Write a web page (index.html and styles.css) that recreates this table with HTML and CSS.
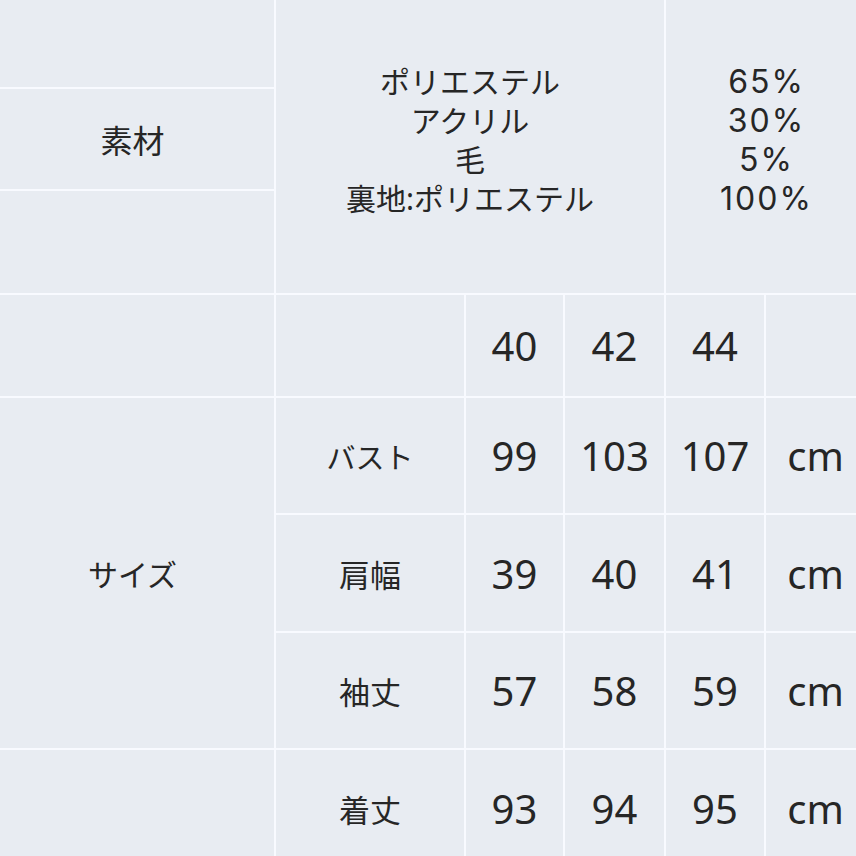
FILE: index.html
```html
<!DOCTYPE html>
<html lang="ja">
<head>
<meta charset="utf-8">
<link rel="stylesheet" href="styles.css">
</head>
<body>
<div class="frame">
  <div class="sheet">
    <div class="cell c-left r1"></div>
    <div class="cell c-left r2 label-big">素材</div>
    <div class="cell c-left r3"></div>
    <div class="cell material">
      <span>ポリエステル</span>
      <span>アクリル</span>
      <span>毛</span>
      <span>裏地:ポリエステル</span>
    </div>
    <div class="cell percent">
      <span>65%</span>
      <span>30%</span>
      <span>5%</span>
      <span>100%</span>
    </div>

    <div class="cell c-left r4"></div>
    <div class="cell c-label r4"></div>
    <div class="cell num r4 k1">40</div>
    <div class="cell num r4 k2">42</div>
    <div class="cell num r4 k3">44</div>
    <div class="cell num r4 k4"></div>

    <div class="cell c-left size label-kana">サイズ</div>

    <div class="cell c-label r5 label kana">バスト</div>
    <div class="cell num r5 k1">99</div>
    <div class="cell num r5 k2">103</div>
    <div class="cell num r5 k3">107</div>
    <div class="cell num r5 k4">cm</div>

    <div class="cell c-label r6 label">肩幅</div>
    <div class="cell num r6 k1">39</div>
    <div class="cell num r6 k2">40</div>
    <div class="cell num r6 k3">41</div>
    <div class="cell num r6 k4">cm</div>

    <div class="cell c-label r7 label">袖丈</div>
    <div class="cell num r7 k1">57</div>
    <div class="cell num r7 k2">58</div>
    <div class="cell num r7 k3">59</div>
    <div class="cell num r7 k4">cm</div>

    <div class="cell c-left r8"></div>
    <div class="cell c-label r8 label">着丈</div>
    <div class="cell num r8 k1">93</div>
    <div class="cell num r8 k2">94</div>
    <div class="cell num r8 k3">95</div>
    <div class="cell num r8 k4">cm</div>
  </div>
</div>
</body>
</html>
```

FILE: styles.css
```css
html, body {
  margin: 0;
  padding: 0;
  width: 856px;
  height: 856px;
  overflow: hidden;
  background: #e8ecf2;
}

.frame {
  width: 856px;
  height: 856px;
  overflow: hidden;
}

.sheet {
  margin-top: -14px;
  margin-left: -9px;
  display: grid;
  grid-template-columns: 283px 188px 97px 99px 98px 99px;
  grid-template-rows: 101px 100px 102px 101px 115px 116px 115px 116px;
  gap: 2px;
  background: #f8faff;
  width: 874px;
  font-family: "Noto Sans", "Noto Sans CJK JP", sans-serif;
  color: #262626;
}

.cell {
  background: #e8ecf2;
  display: flex;
  align-items: center;
  justify-content: center;
  text-align: center;
}

.c-left { grid-column: 1; }
.c-label { grid-column: 2; }
.k1 { grid-column: 3; }
.k2 { grid-column: 4; }
.k3 { grid-column: 5; }
.k4 { grid-column: 6; }

.r1 { grid-row: 1; }
.r2 { grid-row: 2; }
.r3 { grid-row: 3; }
.r4 { grid-row: 4; }
.r5 { grid-row: 5; }
.r6 { grid-row: 6; }
.r7 { grid-row: 7; }
.r8 { grid-row: 8; }

.size { grid-row: 5 / 8; }

.label-big {
  font-family: "Noto Sans CJK JP", sans-serif;
  font-size: 32px;
}

.label-kana {
  font-family: "Noto Sans CJK JP", sans-serif;
  font-size: 30px;
}

.label {
  font-family: "Noto Sans CJK JP", sans-serif;
  font-size: 31px;
}

.label.kana {
  font-size: 29px;
}

.material {
  grid-column: 2 / 5;
  grid-row: 1 / 4;
  flex-direction: column;
  font-family: "Noto Sans", "Noto Sans CJK JP", sans-serif;
  font-size: 30px;
  line-height: 39px;
}

.percent {
  grid-column: 5 / 7;
  grid-row: 1 / 4;
  flex-direction: column;
  font-family: Inter, "Noto Sans", sans-serif;
  font-size: 32px;
  letter-spacing: 2px;
  padding-left: 2px;
  line-height: 39px;
}

.num {
  font-size: 40px;
}
```
